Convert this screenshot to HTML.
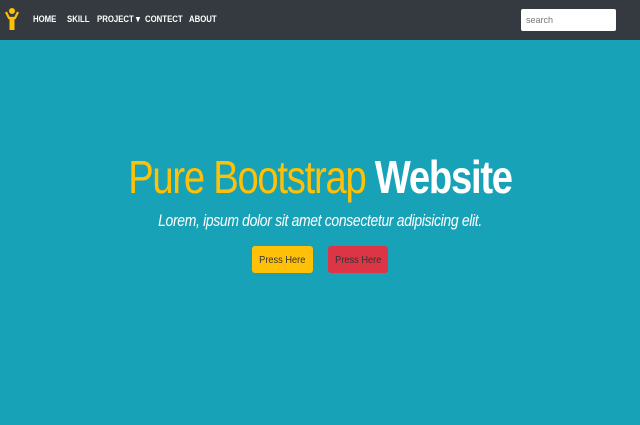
<!DOCTYPE html>
<html><head><style>
*{margin:0;padding:0;box-sizing:border-box}
body{width:640px;height:425px;background:#17a2b8;font-family:"Liberation Sans",sans-serif;overflow:hidden;position:relative}
nav{position:absolute;left:0;top:0;width:640px;height:40px;background:#343a40}
.l{position:absolute;top:15px;line-height:10px;color:#fff;font-size:9.5px;font-weight:bold;transform:scaleX(0.82);transform-origin:left;white-space:nowrap}
.s{position:absolute;left:521px;top:9px;width:95px;height:22px;background:#fff;border-radius:2px;font-size:9px;color:#777;padding:6px 5px}
h1{position:absolute;left:0;width:640px;top:150px;text-align:center;font-size:46px;font-weight:300;color:#ffc107;letter-spacing:-1.5px;transform:scaleX(0.83)}
h1 b{color:#fff;font-weight:bold}
p{position:absolute;top:211px;width:640px;text-align:center;color:#fff;font-style:italic;font-size:17px;letter-spacing:-0.4px;transform:scaleX(0.82)}
.btn{position:absolute;top:246px;height:27px;border-radius:3px;font-size:10.5px;color:#333;text-align:center;line-height:28px}
.btn span{display:inline-block;transform:scaleX(0.88)}
</style></head><body>
<nav>
<svg style="position:absolute;left:5px;top:7px" width="14" height="24" viewBox="0 0 14 24"><circle cx="7" cy="4" r="3" fill="#ffc107"/><path d="M1 5 L4 11 H10 L13 5" stroke="#ffc107" stroke-width="2.2" fill="none"/><rect x="4.5" y="10" width="5" height="13" fill="#ffc107"/></svg>
<span class="l" style="left:33px">HOME</span>
<span class="l" style="left:67px">SKILL</span>
<span class="l" style="left:97px">PROJECT ▾</span>
<span class="l" style="left:145px">CONTECT</span>
<span class="l" style="left:189px">ABOUT</span>
<div class="s">search</div>
</nav>
<h1>Pure Bootstrap <b>Website</b></h1>
<p>Lorem, ipsum dolor sit amet consectetur adipisicing elit.</p>
<div class="btn" style="left:252px;width:61px;background:#ffc107"><span>Press Here</span></div>
<div class="btn" style="left:328px;width:60px;background:#dc3545"><span>Press Here</span></div>
</body></html>
